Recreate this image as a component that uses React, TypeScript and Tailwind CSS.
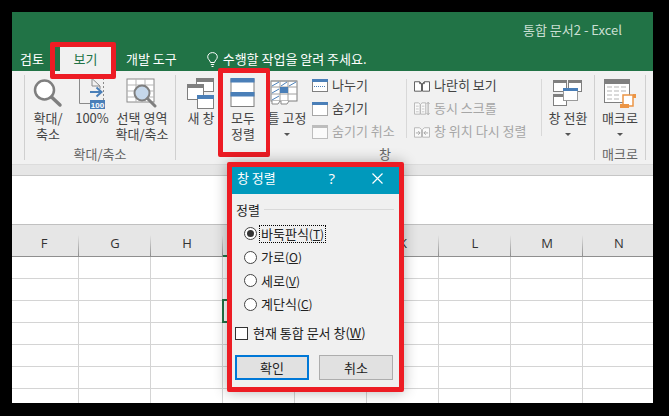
import React from "react";

const blue = "#4a7fb8";
const gray = "#7f7f7f";

function IconMagnifier() {
  return (
    <svg width="30" height="30" viewBox="0 0 30 30">
      <circle cx="11.5" cy="12" r="9.5" fill="#fff" stroke={gray} strokeWidth="2.5" />
      <path d="M18.5 19 L27 27" stroke={gray} strokeWidth="3.5" strokeLinecap="round" />
    </svg>
  );
}

function IconHundred() {
  return (
    <svg width="28" height="33" viewBox="0 0 28 33">
      <path d="M1.5 1.5 H14 L22 9 V12 M14 1.5 V9 H22 M1.5 1.5 V26.5 H12" fill="none" stroke="#8a8a8a" />
      <path d="M25.5 1 V25" stroke="#8a8a8a" strokeDasharray="2 2" />
      <path d="M12 15 H23 M18.5 10.5 L23.5 15 L18.5 19.5" fill="none" stroke={blue} strokeWidth="2" />
      <rect x="12" y="23" width="15" height="9" fill={blue} />
      <text x="19.5" y="30.5" textAnchor="middle" fontSize="8" fontWeight="700" fill="#fff" fontFamily="Liberation Sans">100</text>
    </svg>
  );
}

function IconSelectionZoom() {
  return (
    <svg width="32" height="30" viewBox="0 0 32 30">
      <rect x="1" y="1" width="27" height="23" fill="#fff" stroke="#8a8a8a" />
      <path d="M10 1 V24 M19 1 V24 M1 7 H28 M1 13 H28 M1 19 H28" stroke="#b5b5b5" />
      <circle cx="16" cy="15" r="7.5" fill="#c5d7ea" stroke={gray} strokeWidth="2" />
      <path d="M21.5 20.5 L29 28" stroke={gray} strokeWidth="3" strokeLinecap="round" />
    </svg>
  );
}

function IconNewWindow() {
  const Win = ({ x, y, w, h, color }: { x: number; y: number; w: number; h: number; color: string }) => (
    <g>
      <rect x={x + 0.5} y={y + 0.5} width={w} height={h} fill="#fff" stroke={gray} />
      <rect x={x} y={y} width={w + 1} height="4" fill={color} />
    </g>
  );
  return (
    <svg width="28" height="31" viewBox="0 0 28 31">
      <Win x={9} y={0} w={17} h={13} color={gray} />
      <Win x={0} y={6} w={16} h={15} color={gray} />
      <Win x={10} y={17} w={16} h={13} color={blue} />
    </svg>
  );
}

function IconArrange() {
  return (
    <svg width="26" height="30" viewBox="0 0 26 30">
      <rect x="1" y="1" width="23" height="27.5" fill="#fff" stroke={gray} />
      <rect x="0.5" y="0" width="24" height="4.5" fill={blue} />
      <rect x="0.5" y="14" width="24" height="4.5" fill={blue} />
    </svg>
  );
}

function IconFreeze() {
  return (
    <svg width="34" height="26" viewBox="0 0 34 26">
      <rect x="1" y="1" width="26" height="20" fill="#fff" stroke={gray} />
      <path d="M1 1 H27 M1 7 H27 M1 14 H27 M10 1 V21 M18 1 V21" stroke="#a0a0a0" />
      <path d="M2 6 L9 2 M2 13 L9 9 M2 20 L9 16 M11 6 L17 2 M19 6 L26 2" stroke={blue} />
      <rect x="10" y="7" width="8" height="6" fill={blue} />
      <path d="M2 21 V24 H8 L10 21 M11 21 V24 H17 L19 21" fill="#fff" stroke="#8a8a8a" />
    </svg>
  );
}

function IconSplit() {
  return (
    <svg width="16" height="13" viewBox="0 0 16 13">
      <rect x="0.5" y="0.5" width="15" height="12" fill="#fff" stroke={gray} />
      <rect x="0" y="0" width="16" height="3" fill={blue} />
      <path d="M2 7.5 H14" stroke={blue} strokeDasharray="1 1" />
    </svg>
  );
}

function IconHide() {
  return (
    <svg width="16" height="14" viewBox="0 0 16 14">
      <rect x="0.5" y="2.5" width="15" height="11" fill="#fff" stroke="#555" strokeDasharray="1 1" />
      <rect x="0" y="0" width="16" height="3" fill={blue} />
    </svg>
  );
}

function IconUnhide() {
  return (
    <svg width="16" height="14" viewBox="0 0 16 14">
      <rect x="0.5" y="0.5" width="15" height="13" fill="#fafafa" stroke="#bdbdbd" />
      <rect x="0" y="0" width="16" height="3" fill="#bdbdbd" />
    </svg>
  );
}

function IconSideBySide() {
  return (
    <svg width="17" height="12" viewBox="0 0 17 12">
      <path d="M0.5 1.5 H6 L8 3.5 V11.5 H0.5 Z M9 3.5 L11 1.5 H16.5 V11.5 H9 Z" fill="#fff" stroke="#555" />
      <path d="M6 1.5 V3.5 H8 M11 1.5 V3.5 H9" fill="none" stroke="#555" />
    </svg>
  );
}

function IconSyncScroll() {
  return (
    <svg width="17" height="15" viewBox="0 0 17 15">
      <path d="M0.5 1.5 H5 L6.5 3 V13.5 H0.5 Z M7 3 L8.5 1.5 H12.5 V13.5 H7 Z" fill="#fafafa" stroke="#b5b5b5" />
      <path d="M2 5 H5 M2 8 H5 M2 11 H5 M8.5 5 H11 M8.5 8 H11 M8.5 11 H11" stroke="#c5c5c5" />
      <path d="M15 1 V14 M13.5 2.5 L15 1 L16.5 2.5 M13.5 12.5 L15 14 L16.5 12.5" fill="none" stroke="#a5a5a5" />
    </svg>
  );
}

function IconResetPos() {
  return (
    <svg width="17" height="12" viewBox="0 0 17 12">
      <path d="M0.5 1.5 H6 L8 3.5 V11.5 H0.5 Z M9 3.5 L11 1.5 H16.5 V11.5 H9 Z" fill="#fafafa" stroke="#b5b5b5" />
      <path d="M2 7 H6.5 M4.5 5 L6.5 7 L4.5 9 M15 7 H10.5 M12.5 5 L10.5 7 L12.5 9" fill="none" stroke="#a5a5a5" />
    </svg>
  );
}

function IconSwitch() {
  return (
    <svg width="30" height="27" viewBox="0 0 30 27">
      <rect x="0.5" y="0.5" width="13" height="11" fill="#fff" stroke={gray} />
      <rect x="0" y="0" width="14" height="3" fill={gray} />
      <rect x="15.5" y="0.5" width="13" height="11" fill="#fff" stroke={gray} />
      <rect x="15" y="0" width="14" height="3" fill={gray} />
      <rect x="0.5" y="14.5" width="13" height="11" fill="#fff" stroke={gray} />
      <rect x="0" y="14" width="14" height="3" fill={gray} />
      <rect x="10.5" y="8.5" width="14" height="12" fill="#fff" stroke="#9a9a9a" />
      <rect x="10" y="8" width="15" height="3" fill={blue} />
    </svg>
  );
}

function IconMacro() {
  return (
    <svg width="32" height="29" viewBox="0 0 32 29">
      <rect x="0.5" y="0.5" width="25" height="23" fill="#fff" stroke={gray} />
      <rect x="0" y="0" width="26" height="5" fill={gray} />
      <path d="M3 8 H8 M10 8 H15 M17 8 H22 M3 12 H8 M10 12 H15 M17 12 H22 M3 16 H8 M10 16 H15 M3 20 H8 M10 20 H15" stroke="#b5b5b5" />
      <path d="M19 16 H29 V27 H19 Z" fill="#fff" stroke="#ec9545" strokeWidth="1.5" />
      <rect x="29" y="15" width="3" height="4" fill="#ec9545" />
      <rect x="16" y="25" width="9" height="4" fill="#ec9545" />
    </svg>
  );
}

function Chevron() {
  return (
    <div className="flex h-[16px] items-center justify-center">
      <div className="h-0 w-0 border-x-[3px] border-t-[3px] border-x-transparent border-t-[#555]" />
    </div>
  );
}

function BigButton({ width, icon, lines, chevron }: { width: string; icon: React.ReactNode; lines: string[]; chevron?: boolean }) {
  return (
    <div className={`flex flex-col items-center pt-[5px] ${width}`}>
      <div className="flex h-[34px] items-center justify-center">{icon}</div>
      {lines.map((l) => (
        <div key={l} className="whitespace-nowrap">{l}</div>
      ))}
      {chevron && <Chevron />}
    </div>
  );
}

function SmallRow({ icon, label, muted }: { icon: React.ReactNode; label: string; muted?: boolean }) {
  return (
    <div className={`flex h-[23px] items-center gap-[4px] whitespace-nowrap ${muted ? "text-[#a6a6a6]" : ""}`}>
      <div className="flex w-[16px] items-center justify-center">{icon}</div>
      <span className="-translate-y-[1px]">{label}</span>
    </div>
  );
}

function Radio({ label, hot, checked, focus }: { label: string; hot: string; checked?: boolean; focus?: boolean }) {
  return (
    <div className="flex h-[23.5px] items-center">
      <div className="flex h-[13px] w-[13px] items-center justify-center rounded-full border border-[#444] bg-white">
        {checked && <div className="h-[7px] w-[7px] rounded-full bg-[#333]" />}
      </div>
      <div className={`ml-[2px] flex h-[18px] items-center px-[1px] ${focus ? "border border-dotted border-black" : "border border-transparent"}`}>
        {label}
        <span className="text-[12px]">(<span className="underline">{hot}</span>)</span>
      </div>
    </div>
  );
}

const columns = ["F", "G", "H", "I", "J", "K", "L", "M", "N"];
const rows = [0, 1, 2, 3, 4, 5];

export default function App() {
  return (
    <div
      className="relative h-[416px] w-[669px] overflow-hidden bg-black pb-[13px] pl-[12px] pr-[16px] pt-[12px] text-[13px] leading-[16px] text-[#444]"
      style={{ fontFamily: '"Noto Sans CJK KR", "Noto Sans", sans-serif' }}
    >
      <div className="flex h-full flex-col bg-white">
        {/* title bar + tabs */}
        <div className="h-[59px] bg-[#217346] text-white">
          <div className="flex h-[35px] items-center justify-end pr-[31px] pt-[1px] text-[#c9dfd2]">
            통합 문서2 - Excel
          </div>
          <div className="flex h-[24px] items-center pl-[8px]">
            <span>검토</span>
            <div className="ml-[11px] flex h-[24px] w-[57px] items-center justify-center border-x-[5px] border-r-[1px] border-x-[#217346] bg-[#f1f1f1] text-[#217346]">
              보기
            </div>
            <span className="ml-[14px]">개발 도구</span>
            <svg className="ml-[30px] mr-[5px]" width="11" height="15" viewBox="0 0 11 15">
              <path d="M3.5 10.5 C3 8 .7 7.5 .7 4.8 C.7 2.3 3 .6 5.5 .6 C8 .6 10.3 2.3 10.3 4.8 C10.3 7.5 8 8 7.5 10.5 Z M3.8 12.5 H7.2 M4.5 14.5 H6.5" fill="none" stroke="#fff" />
            </svg>
            <span>수행할 작업을 알려 주세요.</span>
          </div>
        </div>

        {/* ribbon */}
        <div className="flex h-[94px] border-b border-[#dcdcdc] bg-[#f1f1f1]">
          <div className="w-[12px]" />
          <div className="my-[4px] w-px bg-[#d0d0d0]" />

          <div className="flex w-[150px] flex-col">
            <div className="flex h-[75px]">
              <BigButton width="w-[46px]" icon={<IconMagnifier />} lines={["확대/", "축소"]} />
              <BigButton width="w-[42px]" icon={<IconHundred />} lines={["100%"]} />
              <BigButton width="w-[58px]" icon={<IconSelectionZoom />} lines={["선택 영역", "확대/축소"]} />
            </div>
            <div className="text-center text-[#666]">확대/축소</div>
          </div>
          <div className="my-[4px] w-px bg-[#d0d0d0]" />

          <div className="flex w-[418px] flex-col">
            <div className="flex h-[75px] pl-[4px]">
              <BigButton width="w-[42px]" icon={<IconNewWindow />} lines={["새 창"]} />
              <BigButton width="w-[42px]" icon={<IconArrange />} lines={["모두", "정렬"]} />
              <BigButton width="w-[46px]" icon={<IconFreeze />} lines={["틀 고정"]} chevron />
              <div className="flex w-[96px] flex-col pl-[2px] pt-[3px]">
                <SmallRow icon={<IconSplit />} label="나누기" />
                <SmallRow icon={<IconHide />} label="숨기기" />
                <SmallRow icon={<IconUnhide />} label="숨기기 취소" muted />
              </div>
              <div className="my-[8px] w-px bg-[#d8d8d8]" />
              <div className="flex w-[134px] flex-col pl-[7px] pt-[3px]">
                <SmallRow icon={<IconSideBySide />} label="나란히 보기" />
                <SmallRow icon={<IconSyncScroll />} label="동시 스크롤" muted />
                <SmallRow icon={<IconResetPos />} label="창 위치 다시 정렬" muted />
              </div>
              <div className="my-[8px] mb-[10px] w-px bg-[#d8d8d8]" />
              <BigButton width="w-[52px]" icon={<IconSwitch />} lines={["창 전환"]} chevron />
            </div>
            <div className="text-center text-[#666]">창</div>
          </div>
          <div className="my-[4px] w-px bg-[#d0d0d0]" />

          <div className="flex w-[50px] flex-col">
            <div className="flex h-[75px] justify-center">
              <BigButton width="w-[50px]" icon={<IconMacro />} lines={["매크로"]} chevron />
            </div>
            <div className="text-center text-[#666]">매크로</div>
          </div>
          <div className="my-[4px] w-px bg-[#d0d0d0]" />
        </div>

        {/* collapsed strip + formula area */}
        <div className="h-[11px] border-b border-[#c6c6c6] bg-[#e6e6e6]" />
        <div className="h-[48px] bg-white" />

        {/* sheet */}
        <div className="flex h-[33px] overflow-hidden border-y border-[#c0c0c0] border-b-[#8f8f8f] bg-[#e6e6e6] text-[#333]" style={{ fontFamily: '"Open Sans", sans-serif' }}>
          {columns.map((c, i) => (
            <div key={c} className={`relative flex h-full shrink-0 items-center justify-center pt-[4px] text-[13px] ${i === 0 ? "w-[67px] pr-[3px]" : "w-[72px]"}`}>
              {c}
              <div className="absolute bottom-0 right-0 h-[21px] w-px bg-gradient-to-b from-[#e6e6e6] to-[#8f8f8f]" />
            </div>
          ))}
        </div>
        <div className="flex-1 overflow-hidden">
          {rows.map((r) => (
            <div key={r} className="flex h-[22px] border-b border-[#d4d4d4]">
              {columns.map((c, i) => (
                <div key={c} className={`h-full shrink-0 border-r border-[#d4d4d4] ${i === 0 ? "w-[67px]" : "w-[72px]"}`} />
              ))}
            </div>
          ))}
          <div className="flex h-[22px]">
            {columns.map((c, i) => (
              <div key={c} className={`h-full shrink-0 border-r border-[#d4d4d4] ${i === 0 ? "w-[67px]" : "w-[72px]"}`} />
            ))}
          </div>
        </div>
      </div>

      {/* selected cell */}
      <div className="absolute left-[222px] top-[299px] h-[24px] w-[73px] border-2 border-[#217346]" />
      <div className="absolute left-[223px] top-[255px] h-[2px] w-[72px] bg-[#217346]" />

      {/* highlight boxes drawn on the screenshot */}
      <div className="absolute left-[50px] top-[42px] h-[37px] w-[66px] rounded-[2px] border-[5px] border-[#ed1c24]" />
      <div className="absolute left-[218px] top-[68px] h-[89px] w-[52px] rounded-[2px] border-[5px] border-r-[4px] border-[#ed1c24]" />

      {/* dialog */}
      <div className="absolute left-[227px] top-[162px] flex h-[230px] w-[177px] flex-col rounded-[2px] border-[5px] border-[#ed1c24] bg-[#f0f0f0] text-[#222] shadow-[0_0_14px_rgba(0,0,0,0.3)]">
        <div className="flex h-[27px] shrink-0 items-center bg-[#0099bc] pl-[5px] text-white">
          <span className="flex-1 pb-[5px]">창 정렬</span>
          <span className="mr-[37px] pb-[5px] text-[15px]" style={{ fontFamily: '"Open Sans", sans-serif' }}>?</span>
          <svg className="mb-[5px] mr-[16px]" width="11" height="11" viewBox="0 0 11 11">
            <path d="M.5 .5 L10.5 10.5 M10.5 .5 L.5 10.5" stroke="#fff" strokeWidth="1.2" />
          </svg>
        </div>
        <div className="flex h-[15px] shrink-0 translate-y-[8px] items-center pl-[4px]">
          <span>정렬</span>
          <div className="ml-[4px] mr-[5px] h-px flex-1 bg-[#d9d9d9]" />
        </div>
        <div className="mt-[13px] flex flex-col pl-[12px]">
          <Radio label="바둑판식" hot="T" checked focus />
          <Radio label="가로" hot="O" />
          <Radio label="세로" hot="V" />
          <Radio label="계단식" hot="C" />
        </div>
        <div className="ml-[3px] mt-[10px] flex h-[14px] items-center whitespace-nowrap">
          <div className="h-[13px] w-[13px] shrink-0 border border-[#333] bg-white" />
          <span className="ml-[5px]">현재 통합 문서 창(<span className="underline">W</span>)</span>
        </div>
        <div className="ml-[3px] mt-[15px] flex gap-[10px]">
          <div className="flex h-[25px] w-[74px] items-center justify-center border-2 border-[#0078d7] bg-[#e1e1e1]">확인</div>
          <div className="flex h-[25px] w-[74px] items-center justify-center border border-[#adadad] bg-[#e1e1e1]">취소</div>
        </div>
      </div>
    </div>
  );
}
